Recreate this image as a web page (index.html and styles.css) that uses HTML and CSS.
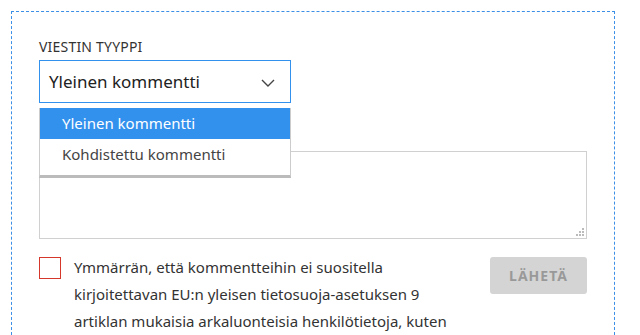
FILE: index.html
```html
<!DOCTYPE html>
<html lang="fi">
<head>
<meta charset="utf-8">
<link rel="stylesheet" href="styles.css">
</head>
<body>
<div class="frame">
  <div class="field">
    <div class="label">VIESTIN TYYPPI</div>
    <div class="select-wrap">
      <div class="select">
        <span>Yleinen kommentti</span>
        <svg class="chev" width="14" height="8" viewBox="0 0 14 8"><path d="M1 1l6 6 6-6" fill="none" stroke="#444" stroke-width="1.4"/></svg>
      </div>
      <ul class="menu">
        <li class="opt active">Yleinen kommentti</li>
        <li class="opt">Kohdistettu kommentti</li>
      </ul>
    </div>
  </div>
  <div class="textarea">
    <svg class="grip" width="8" height="8" viewBox="0 0 8 8"><rect x="6" y="0" width="2" height="2" fill="#bbb"/><rect x="3" y="3" width="2" height="2" fill="#bbb"/><rect x="6" y="3" width="2" height="2" fill="#bbb"/><rect x="0" y="6" width="2" height="2" fill="#bbb"/><rect x="3" y="6" width="2" height="2" fill="#bbb"/><rect x="6" y="6" width="2" height="2" fill="#bbb"/></svg>
  </div>
  <div class="bottom">
    <div class="check"></div>
    <p class="consent">Ymmärrän, että kommentteihin ei suositella kirjoitettavan EU:n yleisen tietosuoja-asetuksen 9 artiklan mukaisia arkaluonteisia henkilötietoja, kuten</p>
    <button class="send">LÄHETÄ</button>
  </div>
</div>
</body>
</html>
```
FILE: styles.css
```css
html, body { margin: 0; padding: 0; background: #fff; }
body { font-family: "Noto Sans", "Open Sans", sans-serif; color: #333; overflow: hidden; height: 335px; }
.frame {
  margin: 11px 0 0 11px;
  width: 604px;
  height: 324px;
  overflow: hidden;
  border: 1px dashed #3b8fe6;
  border-bottom: none;
  box-sizing: border-box;
  padding: 27px 27px 0 27px;
}
.label { font-size: 14px; line-height: 16px; color: #333; letter-spacing: 0.2px; }
.select-wrap { position: relative; margin-top: 5px; width: 252px; }
.select {
  height: 43px; box-sizing: border-box; border: 1px solid #3391ee;
  display: flex; align-items: center; justify-content: space-between;
  padding: 0 15px 0 9px; font-size: 17px; color: #222;
}
.chev { margin-top: 2px; }
.menu {
  position: absolute; left: 0; top: 48px; width: 252px; margin: 0; padding: 0; list-style: none;
  background: #fff; border: 1px solid #ccc; border-top: none; border-bottom: 3px solid #bbb; box-sizing: border-box;
  z-index: 2;
}
.opt { height: 31px; line-height: 31px; padding-left: 22px; font-size: 15px; color: #444; }
.opt + .opt { height: 36px; line-height: 31px; }
.opt.active { background: #3391ee; color: #fff; }
.textarea {
  margin-top: 48px; width: 548px; height: 88px; box-sizing: border-box; border: 1px solid #d0d0d0; position: relative;
}
.grip { position: absolute; right: 2px; bottom: 2px; }
.bottom { display: flex; align-items: flex-start; margin-top: 18px; }
.check { width: 22px; height: 22px; box-sizing: border-box; border: 1px solid #d6372b; flex: none; }
.consent { margin: 0 0 0 13px; width: 400px; font-size: 15px; line-height: 27px; color: #333; position: relative; top: -3px; }
.send {
  margin-left: auto; width: 97px; height: 37px; border: none; border-radius: 3px; background: #d4d4d4;
  color: #999; font-family: inherit; font-weight: 700; font-size: 14px; letter-spacing: 1px; padding: 0;
}
```
